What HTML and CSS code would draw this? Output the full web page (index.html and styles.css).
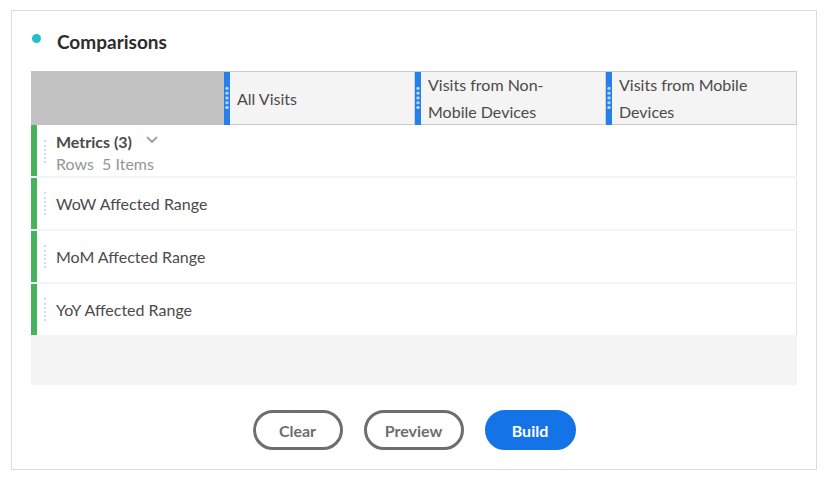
FILE: index.html
```html
<!DOCTYPE html>
<html>
<head>
<meta charset="utf-8">
<link rel="stylesheet" href="styles.css">
</head>
<body>
<div class="panel">
  <div class="title-row">
    <span class="dot"></span>
    <h2 class="title">Comparisons</h2>
  </div>
  <div class="header">
    <div class="corner"></div>
    <div class="col"><span class="grip"></span><span class="col-label">All Visits</span></div>
    <div class="col"><span class="grip"></span><span class="col-label">Visits from Non-<br>Mobile Devices</span></div>
    <div class="col last"><span class="grip"></span><span class="col-label">Visits from Mobile<br>Devices</span></div>
  </div>
  <div class="rows">
    <div class="row">
      <span class="drag"></span>
      <div class="row-body">
        <div class="metric-title">Metrics (3)
          <svg class="chev" width="12" height="8" viewBox="0 0 12 8"><path d="M1.5 1.5 L6 6 L10.5 1.5" fill="none" stroke="#a0a0a0" stroke-width="1.8" stroke-linecap="round" stroke-linejoin="round"/></svg>
        </div>
        <div class="metric-sub">Rows&nbsp; 5 Items</div>
      </div>
    </div>
    <div class="row">
      <span class="drag"></span>
      <div class="row-body"><div class="row-label">WoW Affected Range</div></div>
    </div>
    <div class="row">
      <span class="drag"></span>
      <div class="row-body"><div class="row-label">MoM Affected Range</div></div>
    </div>
    <div class="row">
      <span class="drag"></span>
      <div class="row-body"><div class="row-label">YoY Affected Range</div></div>
    </div>
  </div>
  <div class="actions">
    <button class="btn btn-clear">Clear</button>
    <button class="btn btn-preview">Preview</button>
    <button class="btn btn-build">Build</button>
  </div>
</div>
</body>
</html>
```

FILE: styles.css
```css
* { box-sizing: border-box; }
body {
  margin: 0;
  background: #fff;
  font-family: Lato, "Open Sans", sans-serif;
  color: #4b4b4b;
}
.panel {
  margin: 10px 0 0 11px;
  width: 806px;
  height: 460px;
  border: 1px solid #dcdcdc;
  padding: 0 19px;
}
.title-row {
  height: 60px;
  display: flex;
  align-items: center;
}
.dot {
  width: 9px;
  height: 9px;
  border-radius: 50%;
  background: #22bfc6;
  margin-left: 1px;
  margin-bottom: 5px;
  margin-right: 16px;
}
.title {
  margin: 0;
  font-size: 19px;
  font-weight: 700;
  color: #2c2c2c;
}
.header {
  height: 54px;
  display: grid;
  grid-template-columns: 193px 191px 191px 1fr;
  border: 1px solid #cccccc;
  border-left: none;
  background: #f4f4f4;
}
.corner {
  background: #c2c2c2;
  margin-top: -1px;
  margin-bottom: -1px;
}
.col {
  display: flex;
  align-items: center;
  border-right: 1px solid #d0d0d0;
}
.col.last { border-right: none; }
.grip {
  align-self: stretch;
  width: 6px;
  flex: none;
  background-color: #2680eb;
  position: relative;
}
.grip::after {
  content: "";
  position: absolute;
  left: 0;
  right: 0;
  top: 14px;
  height: 24px;
  background-image: radial-gradient(circle, #b3d6ff 1.4px, transparent 1.9px);
  background-size: 6px 4.8px;
}
.col-label {
  padding-left: 7px;
  font-size: 16px;
  line-height: 27px;
  color: #4b4b4b;
  margin-top: -1px;
}
.rows {
  height: 260px;
  background: #f4f4f4;
  display: flex;
  flex-direction: column;
  gap: 2px;
}
.row {
  height: 51px;
  background: #fff;
  border-left: 6px solid #47b35a;
  border-right: 1px solid #e3e3e3;
  display: flex;
  align-items: center;
}
.drag {
  width: 0;
  height: 23px;
  border-left: 2px dotted #d8d8d8;
  margin-left: 7px;
  margin-right: 10px;
}
.row:first-child .drag { margin-top: 2px; }
.row-body { display: flex; flex-direction: column; }
.row:first-child .row-body { margin-top: 4px; }
.metric-title {
  font-size: 16px;
  font-weight: 700;
  color: #4b4b4b;
  line-height: 21px;
  display: flex;
  align-items: center;
}
.chev { margin-left: 14px; margin-top: -3px; }
.metric-sub {
  font-size: 16px;
  color: #959595;
  line-height: 21px;
  margin-top: 1px;
}
.row-label {
  font-size: 16px;
  color: #4b4b4b;
}
.actions {
  margin-top: 25px;
  display: flex;
  justify-content: center;
  gap: 21px;
}
.btn {
  height: 40px;
  border-radius: 20px;
  font-family: Lato, "Open Sans", sans-serif;
  font-size: 16px;
  font-weight: 700;
  padding: 0;
  background: #fff;
  color: #6e6e6e;
  border: 3px solid #6e6e6e;
}
.btn-clear { width: 90px; }
.btn-preview { width: 100px; }
.btn-build {
  width: 91px;
  background: #1473e6;
  border-color: #1473e6;
  color: #fff;
}
```
